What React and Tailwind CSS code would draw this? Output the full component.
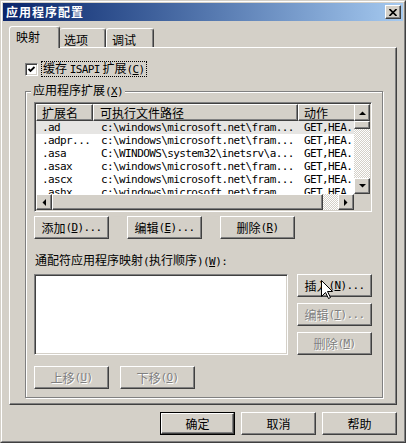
import React from 'react';

const raised =
  "border border-t-white border-l-white border-r-[#404040] border-b-[#404040] shadow-[inset_-1px_-1px_0_#808080]";
const sunken =
  "border border-t-[#808080] border-l-[#808080] border-r-white border-b-white shadow-[inset_1px_1px_0_#404040,inset_-1px_-1px_0_#d4d0c8] p-px";
const mono = "font-['DejaVu_Sans_Mono','Liberation_Mono',monospace] text-[11px] tracking-[-0.6px]";
const checker =
  "[background-image:repeating-conic-gradient(#ffffff_0%_25%,#d4d0c8_0%_50%)] [background-size:2px_2px]";

// latin run inside a cjk label, 6px per char like the dialog font
const M = ({ children }) => <span className={mono}>{children}</span>;

const Btn = ({ children, disabled, def, className = '' }) => {
  const inner = (
    <div
      className={`flex h-full w-full items-center justify-center bg-[#d4d0c8] ${raised} ${
        disabled ? "text-[#808080] [text-shadow:1px_1px_0_#fff]" : 'text-black'
      }`}
    >
      {children}
    </div>
  );
  if (def) {
    return <div className={`border border-black ${className}`}>{inner}</div>;
  }
  return <div className={className}>{inner}</div>;
};

const Arrow = ({ dir }) => {
  const pts = {
    up: '0,4 7,4 3.5,0.5',
    down: '0,0 7,0 3.5,3.5',
    left: '4,0 4,7 0.5,3.5',
    right: '0,0 0,7 3.5,3.5',
  }[dir];
  const vertical = dir === 'up' || dir === 'down';
  return (
    <svg width={vertical ? 7 : 4} height={vertical ? 4 : 7} viewBox={vertical ? '0 0 7 4' : '0 0 4 7'}>
      <polygon points={pts} fill="#000" />
    </svg>
  );
};

const ScrollBtn = ({ dir, className = '' }) => (
  <div className={`flex items-center justify-center bg-[#d4d0c8] ${raised} ${className}`}>
    <Arrow dir={dir} />
  </div>
);

const rows = [
  ['.ad', 'c:\\windows\\microsoft.net\\fram...', 'GET,HEA...'],
  ['.adpr...', 'c:\\windows\\microsoft.net\\fram...', 'GET,HEA...'],
  ['.asa', 'C:\\WINDOWS\\system32\\inetsrv\\a...', 'GET,HEA...'],
  ['.asax', 'c:\\windows\\microsoft.net\\fram...', 'GET,HEA...'],
  ['.ascx', 'c:\\windows\\microsoft.net\\fram...', 'GET,HEA...'],
  ['.ashx', 'c:\\windows\\microsoft.net\\fram...', 'GET,HEA...'],
];

const Header = ({ w, pl, children }) => (
  <div
    className={`flex h-[17px] shrink-0 items-center bg-[#d4d0c8] ${raised} ${w} ${pl} whitespace-nowrap overflow-hidden`}
  >
    {children}
  </div>
);

export default function App() {
  return (
    <div className="relative w-[406px] h-[443px] bg-[#d4d0c8] border border-t-[#d4d0c8] border-l-[#d4d0c8] border-r-[#404040] border-b-[#404040] font-['Noto_Sans_CJK_SC',sans-serif] text-[12px] leading-[14px] text-black select-none">
      <div className="h-full border border-t-white border-l-white border-r-[#808080] border-b-[#808080] p-px">
        {/* title bar */}
        <div className="flex h-[18px] items-center justify-between bg-gradient-to-r from-[#0a246a] to-[#a6caf0] pl-[3px] pr-[2px]">
          <span className="font-bold text-white text-[12px] tracking-[1px]">应用程序配置</span>
          <div className={`flex h-[14px] w-[16px] items-center justify-center bg-[#d4d0c8] ${raised}`}>
            <svg width="8" height="7" viewBox="0 0 8 7">
              <path d="M0.5 0 L7.5 7 M7.5 0 L0.5 7" stroke="#000" strokeWidth="1.6" />
            </svg>
          </div>
        </div>

        <div className="px-[6px] pt-[5px]">
          {/* tabs */}
          <div className="relative z-10 flex h-[21px] items-end">
            <div className="-mb-px h-[22px] w-[51px] rounded-t-[3px] border-l border-t border-r border-l-white border-t-white border-r-[#404040] bg-[#d4d0c8] pl-[6px] pt-[3px] shadow-[inset_-1px_0_0_#808080]">
              映射
            </div>
            <div className="h-[19px] w-[46px] rounded-t-[3px] border-t border-r border-t-white border-r-[#404040] pl-[4px] pt-[4px] shadow-[inset_-1px_0_0_#808080]">
              选项
            </div>
            <div className="h-[19px] w-[48px] rounded-t-[3px] border-l border-t border-r border-l-white border-t-white border-r-[#404040] pl-[5px] pt-[4px] shadow-[inset_-1px_0_0_#808080]">
              调试
            </div>
          </div>

          {/* tab panel */}
          <div className={`h-[358px] ${raised} pl-[15px] pt-[13px]`}>
            <div className="flex items-center">
              <div className={`flex h-[13px] w-[13px] items-center justify-center bg-white ${sunken}`}>
                <svg width="7" height="7" viewBox="0 0 7 7">
                  <path d="M0.5 3 L2.5 5 L6.5 1" stroke="#000" strokeWidth="1.8" fill="none" />
                </svg>
              </div>
              <div className="ml-[3px] border border-dotted border-black px-px leading-[12px]">
                缓存 <M>ISAPI</M> 扩展<M>(<u>C</u>)</M>
              </div>
            </div>

            <fieldset className="mt-[6px] w-[358px] border border-[#808080] shadow-[1px_1px_0_#fff,inset_1px_1px_0_#fff]">
              <legend className="ml-[5px] bg-[#d4d0c8] px-[2px] leading-[14px]">
                应用程序扩展<M>(<u>X</u>)</M>
              </legend>

              <div className="pl-[8px] pb-[8px]">
                {/* list view */}
                <div className={`mt-[3px] h-[110px] w-[338px] bg-white ${sunken}`}>
                  <div className="flex h-full">
                    <div className="flex w-[318px] flex-col">
                      <div className="h-[90px] overflow-hidden">
                        <div className="flex">
                          <Header w="w-[57px]" pl="pl-[5px]">扩展名</Header>
                          <Header w="w-[205px]" pl="pl-[6px]">可执行文件路径</Header>
                          <Header w="w-[70px]" pl="pl-[5px]">动作</Header>
                        </div>
                        {rows.map((r, i) => (
                          <div
                            key={r[0]}
                            className={`flex h-[13px] items-center whitespace-nowrap ${mono} ${
                              i === 0 ? 'bg-[#e6e5e3]' : ''
                            }`}
                          >
                            <div className="w-[57px] shrink-0 pl-[6px]">{r[0]}</div>
                            <div className="w-[205px] shrink-0 pl-[8px]">{r[1]}</div>
                            <div className="w-[70px] shrink-0 pl-[6px]">{r[2]}</div>
                          </div>
                        ))}
                      </div>
                      {/* horizontal scrollbar */}
                      <div className="flex h-[16px]">
                        <ScrollBtn dir="left" className="w-[16px] shrink-0" />
                        <div className={`w-[271px] shrink-0 bg-[#d4d0c8] ${raised}`} />
                        <div className={`w-[15px] shrink-0 ${checker}`} />
                        <ScrollBtn dir="right" className="w-[16px] shrink-0" />
                      </div>
                    </div>
                    {/* vertical scrollbar */}
                    <div className="flex w-[16px] flex-col">
                      <ScrollBtn dir="up" className="h-[17px]" />
                      <div className={`h-[8px] bg-[#d4d0c8] ${raised}`} />
                      <div className={`h-[49px] ${checker}`} />
                      <ScrollBtn dir="down" className="h-[16px]" />
                      <div className="h-[16px] bg-[#d4d0c8]" />
                    </div>
                  </div>
                </div>

                <div className="mt-[4px] flex gap-[18px]">
                  <Btn className="h-[23px] w-[75px]">
                    添加<M>(<u>D</u>)...</M>
                  </Btn>
                  <Btn className="h-[23px] w-[75px]">
                    编辑<M>(<u>E</u>)...</M>
                  </Btn>
                  <Btn className="h-[23px] w-[75px]">
                    删除<M>(<u>R</u>)</M>
                  </Btn>
                </div>

                <div className="ml-px mt-[14px] leading-[14px]">
                  通配符应用程序映射<M>(</M>执行顺序<M>)(<u>W</u>):</M>
                </div>

                <div className="mt-[5px] flex">
                  <div className={`h-[81px] w-[254px] bg-white ${sunken}`} />
                  <div className="ml-[9px] flex flex-col gap-[6px]">
                    <Btn className="h-[23px] w-[75px]">
                      插入<M>(<u>N</u>)...</M>
                    </Btn>
                    <Btn disabled className="h-[23px] w-[75px]">
                      编辑<M>(<u>T</u>)...</M>
                    </Btn>
                    <Btn disabled className="h-[23px] w-[75px]">
                      删除<M>(<u>M</u>)</M>
                    </Btn>
                  </div>
                </div>

                <div className="mt-[11px] flex gap-[11px]">
                  <Btn disabled className="h-[23px] w-[75px]">
                    上移<M>(<u>U</u>)</M>
                  </Btn>
                  <Btn disabled className="h-[23px] w-[75px]">
                    下移<M>(<u>O</u>)</M>
                  </Btn>
                </div>
              </div>
            </fieldset>
          </div>

          {/* dialog buttons */}
          <div className="mt-[7px] flex justify-end gap-[6px]">
            <Btn def className="h-[23px] w-[75px]">确定</Btn>
            <Btn className="h-[23px] w-[75px]">取消</Btn>
            <Btn className="h-[23px] w-[75px]">帮助</Btn>
          </div>
        </div>
      </div>

      {/* mouse pointer over 插入 */}
      <svg className="absolute left-[320px] top-[279px]" width="13" height="20" viewBox="0 0 13 20">
        <polygon
          points="0.5,0.5 0.5,16.5 4.5,12.5 7.5,18.5 9.5,17.5 6.5,11.5 11.5,11.5"
          fill="#fff"
          stroke="#000"
          strokeWidth="1"
        />
      </svg>
    </div>
  );
}
